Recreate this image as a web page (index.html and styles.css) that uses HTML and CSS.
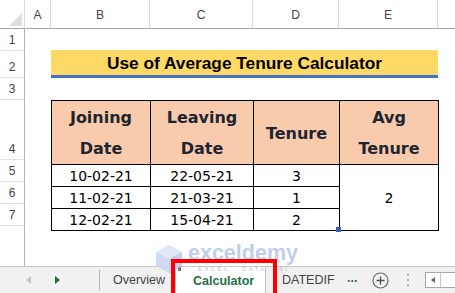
FILE: index.html
```html
<!DOCTYPE html>
<html>
<head>
<meta charset="utf-8">
<link rel="stylesheet" href="styles.css">
</head>
<body>
<div class="app">
  <div class="sheet">
    <div class="corner">
      <svg width="24" height="28" viewBox="0 0 24 28"><polygon points="22,13 22,26 9,26" fill="#dedede"/></svg>
    </div>
    <div class="ch">A</div>
    <div class="ch">B</div>
    <div class="ch">C</div>
    <div class="ch">D</div>
    <div class="ch">E</div>
    <div class="ch last"></div>

    <div class="rh rh1">1</div>
    <div class="rh rh2">2</div>
    <div class="rh rh3">3</div>
    <div class="rh rh4">4</div>
    <div class="rh rh5">5</div>
    <div class="rh rh6">6</div>
    <div class="rh rh7">7</div>
    <div class="rh rh8"></div>

    <div class="title">Use of Average Tenure Calculator</div>

    <table class="data">
      <colgroup>
        <col class="cb"><col class="cc"><col class="cd"><col class="ce">
      </colgroup>
      <tr class="head">
        <th>Joining<br>Date</th>
        <th>Leaving<br>Date</th>
        <th>Tenure</th>
        <th>Avg<br>Tenure</th>
      </tr>
      <tr>
        <td>10-02-21</td>
        <td>22-05-21</td>
        <td>3</td>
        <td rowspan="3" class="avg">2</td>
      </tr>
      <tr>
        <td>11-02-21</td>
        <td>21-03-21</td>
        <td>1</td>
      </tr>
      <tr>
        <td>12-02-21</td>
        <td>15-04-21</td>
        <td class="sel">2<span class="handle"></span></td>
      </tr>
    </table>
  </div>

  <div class="tabbar">
    <div class="nav">
      <span class="arr left"></span>
      <span class="arr right"></span>
    </div>
    <div class="sep"></div>
    <div class="tab t-over">Overview</div>
    <div class="tab t-calc">Calculator<span class="mark"></span></div>
    <div class="tab t-date">DATEDIF</div>
    <div class="more">...</div>
    <div class="plus">
      <svg width="17" height="17" viewBox="0 0 17 17"><circle cx="8.5" cy="8.5" r="7.5" fill="none" stroke="#6a6a6a" stroke-width="1.2"/><path d="M8.5 4.5v8M4.5 8.5h8" stroke="#555" stroke-width="1.4"/></svg>
    </div>
    <div class="vdots"><span></span><span></span><span></span></div>
    <div class="hscroll">
      <div class="hs-btn"><span class="arr sleft"></span></div>
      <div class="hs-track"></div>
    </div>
  </div>

  <div class="watermark">
    <svg class="wm-logo" width="28" height="30" viewBox="0 0 28 30"><polygon points="14,1 27,8 27,22 14,29 1,22 1,8" fill="#c9d6f0"/><polygon points="14,1 27,8 14,15 1,8" fill="#dbe4f6"/><polygon points="14,15 27,8 27,22 14,29" fill="#b9c9ec"/></svg>
    <div class="wm-text">
      <div class="wm-name">exceldemy</div>
      <div class="wm-sub">EXCEL · DATA · BI</div>
    </div>
  </div>

  <div class="redbox"></div>
</div>
</body>
</html>
```

FILE: styles.css
```css
* { box-sizing: border-box; }
html, body { margin: 0; padding: 0; }
body {
  width: 455px;
  height: 293px;
  overflow: hidden;
  background: #ffffff;
  font-family: "Liberation Sans", Arial, sans-serif;
}
.app {
  position: relative;
  width: 455px;
  height: 293px;
  display: flex;
  flex-direction: column;
}
.sheet {
  display: grid;
  grid-template-columns: 25px 26px 99px 103px 86px 99px 1fr;
  grid-template-rows: 29px 22px 27px 22px 60px 22px 22px 22px 1fr;
  height: 266px;
}
.corner {
  border-right: 1px solid #d9d9d9;
  border-bottom: 1px solid #a6a6a6;
}
.corner svg { display: block; }
.ch {
  border-right: 1px solid #dadada;
  border-bottom: 1px solid #a6a6a6;
  color: #444444;
  font-size: 12px;
  display: flex;
  align-items: center;
  justify-content: center;
  padding-top: 2px;
}
.ch.last { border-right: none; }
.rh {
  grid-column: 1;
  border-right: 1px solid #b3b3b3;
  border-bottom: 1px solid #e1e1e1;
  color: #444444;
  font-size: 12px;
  display: flex;
  align-items: flex-end;
  justify-content: center;
  padding-bottom: 3px;
}
.rh1 { grid-row: 2; }
.rh2 { grid-row: 3; }
.rh3 { grid-row: 4; }
.rh4 { grid-row: 5; }
.rh5 { grid-row: 6; }
.rh6 { grid-row: 7; }
.rh7 { grid-row: 8; }
.rh8 { grid-row: 9; border-bottom: none; }

.title {
  grid-column: 3 / 7;
  grid-row: 3;
  margin-top: -1px;
  background: #ffd966;
  border-bottom: 3px solid #4472c4;
  font-weight: bold;
  font-size: 17.3px;
  color: #000;
  display: flex;
  align-items: center;
  justify-content: center;
  padding-top: 1px;
}

.data {
  grid-column: 3 / 7;
  grid-row: 5 / 9;
  border-collapse: collapse;
  width: 100%;
  height: 100%;
  table-layout: fixed;
  font-family: "DejaVu Sans", sans-serif;
}
.cb { width: 99px; }
.cc { width: 103px; }
.cd { width: 86px; }
.ce { width: 99px; }
.data th, .data td {
  border: 1px solid #000;
  padding: 0;
  text-align: center;
  vertical-align: middle;
}
.data th {
  background: #f8cbad;
  font-weight: bold;
  font-size: 16px;
  line-height: 31px;
  color: #1e2530;
  padding-top: 1px;
}
.head { height: 60px; }
.data td {
  font-size: 14px;
  color: #000;
  height: 22px;
  line-height: 20px;
}
.data td.avg { vertical-align: middle; }
.data td.sel { position: relative; }
.handle {
  position: absolute;
  right: -2px;
  bottom: -2px;
  width: 5px;
  height: 5px;
  background: #3b5cb3;
}

.tabbar {
  height: 27px;
  background: #f1f1f1;
  border-top: 1px solid #c8c8c8;
  display: flex;
  align-items: center;
  font-size: 12.5px;
  color: #444;
}
.nav {
  width: 99px;
  height: 100%;
  display: flex;
  align-items: center;
  padding-left: 26px;
}
.arr {
  display: block;
  width: 0;
  height: 0;
  border-top: 4px solid transparent;
  border-bottom: 4px solid transparent;
}
.arr.left { border-right: 5px solid #c3c3c3; }
.arr.right { border-left: 5px solid #1e6b36; margin-left: 24px; }
.sep {
  width: 1px;
  height: 20px;
  background: #b4b4b4;
}
.tab {
  height: 100%;
  display: flex;
  align-items: center;
}
.t-over {
  width: 75px;
  padding-left: 13px;
  color: #444;
}
.t-calc {
  position: relative;
  width: 91px;
  padding-left: 17px;
  padding-top: 2px;
  background: #ffffff;
  border-left: 1px solid #c0c0c0;
  border-right: 1px solid #c0c0c0;
  font-weight: bold;
  color: #1e7145;
}
.t-calc .mark {
  position: absolute;
  left: 2px;
  top: 0;
  width: 3px;
  height: 4px;
  background: #777;
}
.t-date {
  width: 64px;
  padding-left: 16px;
  color: #444;
}
.more {
  width: 42px;
  padding-left: 17px;
  color: #1e7145;
  font-weight: bold;
  padding-bottom: 4px;
}
.plus {
  width: 17px;
  height: 17px;
}
.plus svg { display: block; }
.vdots {
  width: 36px;
  height: 100%;
  display: flex;
  flex-direction: column;
  align-items: center;
  justify-content: center;
  gap: 3px;
  padding-left: 2px;
}
.vdots span {
  display: block;
  width: 2px;
  height: 2px;
  background: #b0b0b0;
}
.hscroll {
  flex: 1;
  height: 16px;
  display: flex;
  border: 1px solid #a8a8a8;
  border-right: none;
  background: #fff;
}
.hs-btn {
  width: 15px;
  border-right: 1px solid #c8c8c8;
  display: flex;
  align-items: center;
  justify-content: center;
}
.arr.sleft {
  border-top: 3px solid transparent;
  border-bottom: 3px solid transparent;
  border-right: 4px solid #666;
}
.hs-track { flex: 1; }

.watermark {
  position: absolute;
  left: 155px;
  top: 241px;
  display: flex;
  align-items: flex-start;
  gap: 5px;
  opacity: 0.85;
  pointer-events: none;
}
.wm-logo { display: block; margin-top: 3px; }
.wm-name {
  font-family: "Liberation Sans", Arial, sans-serif;
  font-weight: bold;
  font-size: 21.5px;
  line-height: 24px;
  color: #b7c5ea;
}
.wm-sub {
  font-size: 6px;
  line-height: 6px;
  letter-spacing: 2.4px;
  color: #b9b9b9;
  margin-left: 10px;
  margin-top: 1px;
}

.redbox {
  position: absolute;
  left: 171px;
  top: 259px;
  width: 106px;
  height: 38px;
  border: 4px solid #ff0000;
}
```
